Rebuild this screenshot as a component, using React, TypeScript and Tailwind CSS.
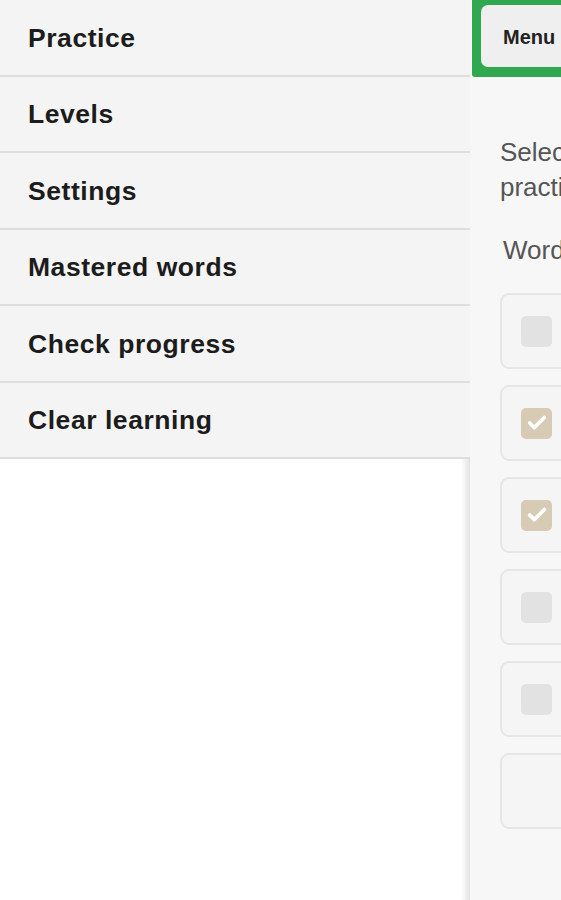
import { Check } from 'lucide-react';

const menuItems = ['Practice', 'Levels', 'Settings', 'Mastered words', 'Check progress', 'Clear learning'];

const words = [
  { checked: false },
  { checked: true },
  { checked: true },
  { checked: false },
  { checked: false },
  { checked: null },
];

export default function App() {
  return (
    <div
      className="flex w-[561px] h-[900px] overflow-hidden bg-[#f7f7f7]"
      style={{ fontFamily: '"Liberation Sans", Arial, sans-serif' }}
    >
      {/* Side menu */}
      <div className="flex flex-col w-[470px] shrink-0">
        {menuItems.map((item) => (
          <div
            key={item}
            className="h-[76.5px] shrink-0 flex items-center pl-[28px] pt-[3px] bg-[#f4f4f4] border-b-2 border-[#dedede] shadow-[0_1px_1px_rgba(0,0,0,0.05)]"
          >
            <span className="text-[26.5px] font-bold tracking-[0.55px] text-[#1c1c1c]">{item}</span>
          </div>
        ))}
        <div className="flex flex-1 bg-white">
          <div className="flex-1" />
          <div className="w-[9px] bg-gradient-to-r from-white to-[#e2e2e2]" />
        </div>
      </div>

      {/* Main panel */}
      <div className="flex flex-col flex-1 min-w-0">
        <div className="h-[77px] ml-[2px] pt-[5px] pb-[10px] pl-[9px] bg-[#2fa84f] rounded-bl-[3px]">
          <div className="h-full w-[200px] flex items-center pl-[22px] pt-[2px] bg-[#efefef] rounded-l-[7px]">
            <span className="text-[20px] font-bold text-[#222]">Menu</span>
          </div>
        </div>

        <div className="pl-[30px] pt-[58px] w-[320px]">
          <p className="text-[26px] leading-[35px] text-[#555]">
            Select the words to practice
          </p>
          <p className="mt-[30px] ml-[3px] text-[26px] leading-[30px] text-[#555]">Words</p>

          <div className="mt-[28px] flex flex-col gap-[16px]">
            {words.map((w, i) => (
              <div
                key={i}
                className="h-[76px] flex items-center pl-[19px] rounded-[9px] border-2 border-[#e6e6e6] bg-[#f5f5f5]"
              >
                {w.checked === null ? null : w.checked ? (
                  <div className="w-[31px] h-[31px] rounded-[5px] bg-[#d8cbb6] flex items-center justify-center">
                    <Check className="w-[22px] h-[22px] text-white" strokeWidth={4} />
                  </div>
                ) : (
                  <div className="w-[31px] h-[31px] rounded-[5px] bg-[#e2e2e2]" />
                )}
              </div>
            ))}
          </div>
        </div>
      </div>
    </div>
  );
}
